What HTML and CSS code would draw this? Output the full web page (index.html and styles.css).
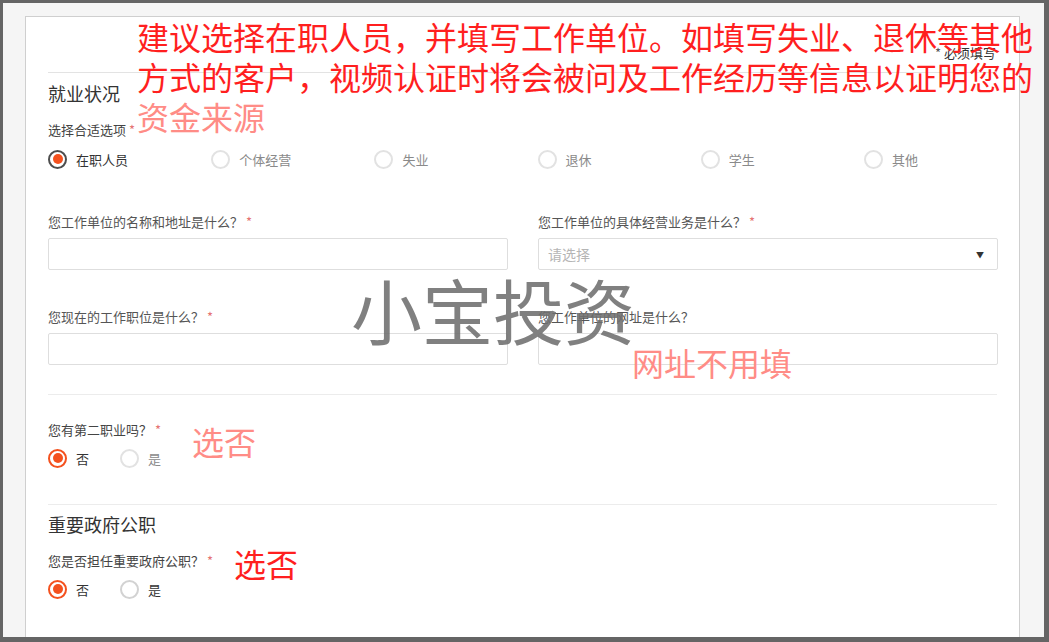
FILE: index.html
```html
<!DOCTYPE html>
<html lang="zh-CN">
<head>
<meta charset="utf-8">
<title>就业状况</title>
<link rel="stylesheet" href="styles.css">
</head>
<body>
<div class="frame">
  <div class="screen">
    <div class="card">
      <div class="card-head"><span class="req-note"><span class="star">*</span> 必须填写</span></div>

      <h2 class="sec-title">就业状况</h2>
      <div class="q-label">选择合适选项 <span class="star">*</span></div>
      <div class="radios six">
        <label class="radio"><span class="dot focus"></span><span class="r-text on">在职人员</span></label>
        <label class="radio"><span class="dot"></span><span class="r-text">个体经营</span></label>
        <label class="radio"><span class="dot"></span><span class="r-text">失业</span></label>
        <label class="radio"><span class="dot"></span><span class="r-text">退休</span></label>
        <label class="radio"><span class="dot"></span><span class="r-text">学生</span></label>
        <label class="radio"><span class="dot"></span><span class="r-text">其他</span></label>
      </div>

      <div class="fields">
        <div class="field">
          <div class="f-label">您工作单位的名称和地址是什么？ <span class="star">*</span></div>
          <div class="input"></div>
        </div>
        <div class="field">
          <div class="f-label">您工作单位的具体经营业务是什么？ <span class="star">*</span></div>
          <div class="input select"><span class="ph">请选择</span><span class="caret">▼</span></div>
        </div>
        <div class="field">
          <div class="f-label">您现在的工作职位是什么？ <span class="star">*</span></div>
          <div class="input"></div>
        </div>
        <div class="field">
          <div class="f-label">您工作单位的网址是什么？</div>
          <div class="input"></div>
        </div>
      </div>

      <hr class="divider d1">
      <div class="q-label q2">您有第二职业吗？ <span class="star">*</span></div>
      <div class="radios two">
        <label class="radio"><span class="dot sel"></span><span class="r-text on">否</span></label>
        <label class="radio"><span class="dot"></span><span class="r-text">是</span></label>
      </div>

      <hr class="divider d2">
      <h2 class="sec-title t2">重要政府公职</h2>
      <div class="q-label">您是否担任重要政府公职？ <span class="star">*</span></div>
      <div class="radios two">
        <label class="radio"><span class="dot sel"></span><span class="r-text on">否</span></label>
        <label class="radio"><span class="dot grey"></span><span class="r-text on">是</span></label>
      </div>
      <hr class="divider d3">
    </div>
  </div>

  <div class="watermark">小宝投资</div>
  <div class="note note-main">建议选择在职人员，并填写工作单位。如填写失业、退休等其他<br>方式的客户，视频认证时将会被问及工作经历等信息以证明您的<br><span class="soft">资金来源</span></div>
  <div class="note note-url soft">网址不用填</div>
  <div class="note note-no1 soft">选否</div>
  <div class="note note-no2">选否</div>
</div>
</body>
</html>
```

FILE: styles.css
```css
* { box-sizing: border-box; }
html, body { margin: 0; padding: 0; }
body {
  font-family: "Noto Sans CJK SC", "Noto Sans", sans-serif;
  background: #656565;
}
.frame {
  position: relative;
  width: 1049px;
  height: 642px;
  padding: 3px 5px 5px 3px;
  background: #656565;
  overflow: hidden;
}
.screen {
  height: 634px;
  background: #f5f5f5;
  padding: 13px 0 0 22px;
  overflow: hidden;
}
.card {
  width: 995px;
  height: 700px;
  background: #fff;
  border: 1px solid #cfcfcf;
  border-bottom: none;
  padding: 0 22px;
}
.card-head {
  height: 56px;
  padding-top: 22px;
  border-bottom: 1px solid #e3e3e3;
  text-align: right;
}
.req-note {
  font-size: 13px;
  line-height: 18px;
  color: #333;
  margin-right: 1px;
}
.star { color: #e57373; }
.req-note .star { color: #555; }

.sec-title {
  margin: 8px 0 0;
  font-size: 18px;
  line-height: 24px;
  font-weight: normal;
  color: #333;
}
.sec-title.t2 { margin-top: 7px; }

.q-label {
  margin-top: 16px;
  font-size: 13px;
  line-height: 18px;
  color: #444;
}
.q-label.q2 { margin-top: 26px; }

.radios {
  display: flex;
  margin-top: 10px;
  height: 20px;
}
.radios.two { margin-top: 9px; }
.radios.six .radio { width: 163.2px; flex: none; }
.radios.two .radio { width: 72px; flex: none; }
.radio {
  display: flex;
  align-items: center;
  height: 20px;
}
.dot {
  width: 19px;
  height: 19px;
  border-radius: 50%;
  border: 2px solid #e2e2e2;
  background: #fff;
  position: relative;
  flex: none;
}
.dot.sel { border-color: #f4511e; }
.dot.focus { border-color: #4d4d4d; }
.dot.sel::after, .dot.focus::after {
  content: "";
  position: absolute;
  left: 2.5px;
  top: 2.5px;
  width: 10px;
  height: 10px;
  border-radius: 50%;
  background: #f4511e;
}
.dot.grey { border-color: #d2d2d2; }
.r-text {
  margin-left: 9px;
  font-size: 13px;
  color: #8a8a8a;
}
.r-text.on { color: #333; }

.fields {
  display: grid;
  grid-template-columns: 460px 460px;
  column-gap: 30px;
  row-gap: 38px;
  margin-top: 44px;
}
.f-label {
  font-size: 13px;
  line-height: 18px;
  color: #555;
  margin-bottom: 7px;
}
.input {
  height: 32px;
  border: 1px solid #dedede;
  border-radius: 2px;
  background: #fff;
}
.select {
  display: flex;
  align-items: center;
  justify-content: space-between;
  padding: 0 13px 0 9px;
}
.ph { font-size: 14px; color: #b5b5b5; }
.caret { font-size: 8px; color: #333; }

.divider {
  border: none;
  border-top: 1px solid #ececec;
  margin: 0;
  height: 0;
}
.d1 { margin-top: 29px; }
.d2 { margin-top: 36px; }
.d3 { margin-top: 38px; }

.watermark {
  position: absolute;
  left: 351px;
  top: 266px;
  font-size: 71px;
  line-height: 84px;
  color: rgba(110, 110, 110, 0.88);
  white-space: nowrap;
}
.note {
  position: absolute;
  color: #ff1f1f;
  white-space: nowrap;
}
.soft { color: #ff8c86; }
.note-main {
  left: 137px;
  top: 16px;
  font-size: 32px;
  line-height: 40px;
}
.note-url { left: 632px; top: 341px; font-size: 32px; line-height: 42px; }
.note-no1 { left: 192px; top: 420px; font-size: 32px; line-height: 42px; }
.note-no2 { left: 234px; top: 542px; font-size: 32px; line-height: 42px; }
```
